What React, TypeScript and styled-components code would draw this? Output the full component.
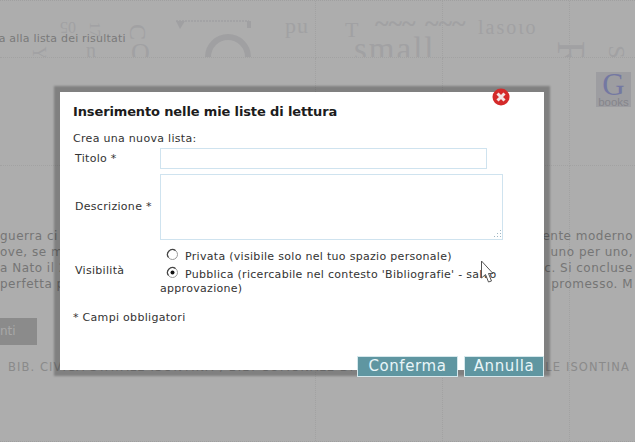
import { FC } from "react";
import styled, { createGlobalStyle } from "styled-components";

const GlobalStyle = createGlobalStyle`
  html, body { margin: 0; padding: 0; background: #adadad; }
  body { font-family: "DejaVu Sans", Verdana, sans-serif; }
`;

const Page = styled.div`
  position: relative;
  width: 635px;
  height: 442px;
  overflow: hidden;
  background: #adadad;
`;

const Backdrop = styled.div`
  position: absolute;
  inset: 0;
  display: grid;
  grid-template-columns: 316px 127px 127px 1fr;
  grid-template-rows: 57px 108px 1fr;
  border-top: 1px dotted #a0a0a0;
  border-bottom: 1px dotted #a0a0a0;
  box-sizing: border-box;
`;

const Cell = styled.div`
  border-right: 1px dotted #a2a2a2;
  border-bottom: 1px dotted #a2a2a2;
  &:nth-child(4n) { border-right: 0; }
  &:nth-child(n + 9) { border-bottom: 0; }
`;

const Content = styled.div`
  position: relative;
  display: flex;
  flex-direction: column;
  height: 100%;
`;

const Banner = styled.header`
  position: relative;
  height: 57px;
  overflow: hidden;
  flex: none;
`;

const Glyph = styled.span<{ $x: number; $y: number; $size: number; $turn?: number; $bold?: boolean; $track?: number }>`
  position: absolute;
  left: ${(p) => p.$x}px;
  top: ${(p) => p.$y}px;
  font-family: "Liberation Serif", serif;
  font-size: ${(p) => p.$size}px;
  font-weight: ${(p) => (p.$bold ? 700 : 400)};
  letter-spacing: ${(p) => p.$track ?? 0}px;
  line-height: 1;
  color: #a1a1a3;
  white-space: nowrap;
  transform: rotate(${(p) => p.$turn ?? 0}deg);
`;

const BackLink = styled.a`
  position: absolute;
  left: -25px;
  top: 32px;
  font-size: 11px;
  line-height: 14px;
  letter-spacing: 0.2px;
  color: #7a7a7a;
  white-space: nowrap;
`;

const Ornament = styled.svg`
  position: absolute;
  left: 170px;
  top: 18px;
`;

const BooksBadge = styled.div`
  align-self: flex-end;
  width: 35px;
  height: 35px;
  margin: 15px 4px 0 0;
  background: #9d9da1;
  display: flex;
  flex-direction: column;
  align-items: center;
  overflow: hidden;
`;

const BooksG = styled.span`
  font-family: "Liberation Serif", serif;
  font-size: 31px;
  line-height: 26px;
  color: #7478a2;
`;

const BooksLabel = styled.span`
  font-family: "Liberation Sans", sans-serif;
  font-size: 11.5px;
  line-height: 9px;
  color: #85858b;
`;

const Article = styled.section`
  margin-top: 121px;
  display: flex;
  flex-direction: column;
  font-size: 12px;
  line-height: 16px;
  letter-spacing: 0.5px;
  color: #757575;
`;

const ArticleRow = styled.div`
  display: flex;
  justify-content: space-between;
  padding-right: 2px;
  white-space: nowrap;
`;

const MoreButton = styled.div`
  width: 37px;
  height: 27px;
  margin-top: 26px;
  background: #8b8b8b;
  color: #a8a8a8;
  font-size: 12px;
  line-height: 27px;
  overflow: hidden;
  flex: none;
`;

const LibraryLine = styled.div`
  margin: 15px 5px 0 8px;
  display: flex;
  justify-content: space-between;
  font-size: 11.5px;
  line-height: 14px;
  letter-spacing: 1.1px;
  color: #8a8a8a;
  white-space: nowrap;
`;

const Modal = styled.div`
  position: absolute;
  left: 60px;
  top: 92px;
  width: 484px;
  height: 278px;
  box-sizing: border-box;
  padding: 12px 0 0 13px;
  display: flex;
  flex-direction: column;
  background: #fff;
  box-shadow: 0 0 2px 6px rgba(0, 0, 0, 0.26);
  color: #333;
  font-size: 11px;
  line-height: 14px;
  letter-spacing: 0.3px;
`;

const CloseButton = styled.svg`
  position: absolute;
  left: 432px;
  top: -4px;
`;

const Title = styled.h2`
  margin: 0;
  font-size: 13px;
  line-height: 15px;
  font-weight: 700;
  letter-spacing: -0.13px;
  color: #1c1c1c;
`;

const Intro = styled.p`
  margin: 13px 0 0;
`;

const FieldRow = styled.div<{ $gap: number }>`
  display: grid;
  grid-template-columns: 85px 1fr;
  align-items: center;
  padding-left: 2px;
  margin-top: ${(p) => p.$gap}px;
`;

const FieldLabel = styled.label<{ $drop?: number }>`
  padding-top: ${(p) => p.$drop ?? 0}px;
`;

const TextField = styled.div<{ $w: number; $h: number }>`
  width: ${(p) => p.$w}px;
  height: ${(p) => p.$h}px;
  box-sizing: border-box;
  border: 1px solid #cfe3ef;
  background: #fff;
  position: relative;
`;

const ResizeGrip = styled.svg`
  position: absolute;
  right: 0;
  bottom: 0;
`;

const RadioList = styled.div`
  display: flex;
  flex-direction: column;
  margin-top: 8px;
`;

const RadioLine = styled.div`
  padding-left: 6px;
  height: 18px;
  display: flex;
  align-items: flex-start;
  white-space: nowrap;
`;

const RadioDot = styled.svg`
  flex: none;
  margin-right: 6px;
`;

const RadioText = styled.span`
  padding-top: 2px;
`;

const Wrapped = styled.div`
  margin-top: -2px;
`;

const Note = styled.p`
  margin: 15px 0 0;
`;

const Actions = styled.div`
  margin-top: auto;
  margin-bottom: -7px;
  display: flex;
  justify-content: flex-end;
  gap: 6px;
`;

const ActionButton = styled.button<{ $w: number }>`
  width: ${(p) => p.$w}px;
  height: 21px;
  padding: 0;
  background: #5f96a1;
  border: 1px solid #d5e8ec;
  color: #e8f5f8;
  font-family: "DejaVu Sans", sans-serif;
  font-size: 15px;
  line-height: 17px;
  letter-spacing: 0.6px;
`;

const Pointer = styled.svg`
  position: absolute;
  left: 420px;
  top: 168px;
`;

const Radio: FC<{ checked?: boolean }> = ({ checked }) => (
  <RadioDot width="13" height="13" viewBox="0 0 13 13">
    <circle cx="6.5" cy="6.5" r="5" fill="#fff" stroke="#9a9a9a" />
    <path d="M2.5 9.5 A5 5 0 0 1 9.5 2.5" fill="none" stroke="#444" strokeWidth="1.2" />
    {checked && <circle cx="6.5" cy="6.5" r="2" fill="#111" />}
  </RadioDot>
);

export default function App() {
  return (
    <Page>
      <GlobalStyle />
      <Backdrop>
        {Array.from({ length: 12 }).map((_, i) => (
          <Cell key={i} />
        ))}
      </Backdrop>
      <Content>
        <Banner>
          <BackLink>Torna alla lista dei risultati</BackLink>
          <Glyph $x={60} $y={19} $size={16} $turn={180}>05</Glyph>
          <Glyph $x={87} $y={22} $size={15} $turn={90}>17</Glyph>
          <Glyph $x={32} $y={44} $size={18} $turn={90}>Y</Glyph>
          <Glyph $x={86} $y={44} $size={20} $turn={180}>u</Glyph>
          <Glyph $x={130} $y={20} $size={24} $turn={90}>C</Glyph>
          <Glyph $x={131} $y={40} $size={26}>O</Glyph>
          <Ornament width="90" height="40" viewBox="0 0 90 40">
            <path d="M6 3 H79" stroke="#a0a0a2" strokeWidth="1.5" strokeDasharray="2 1" />
            <path d="M6 3 H15 L10 11 Z" fill="#a0a0a2" />
            <path d="M77 3 H81 V10 H77 Z" fill="#a0a0a2" />
            <circle cx="58" cy="39" r="20" fill="none" stroke="#a0a0a2" strokeWidth="6" />
          </Ornament>
          <Glyph $x={285} $y={15} $size={22} $track={1}>pu</Glyph>
          <Glyph $x={345} $y={19} $size={22}>T</Glyph>
          <Glyph $x={375} $y={11} $size={26} $bold>~~~</Glyph>
          <Glyph $x={425} $y={11} $size={26} $bold>~~~</Glyph>
          <Glyph $x={354} $y={33} $size={33} $track={2}>small</Glyph>
          <Glyph $x={478} $y={17} $size={20} $track={2}>lasoɩo</Glyph>
          <Glyph $x={558} $y={34} $size={40} $turn={90}>R</Glyph>
          <Glyph $x={610} $y={40} $size={24} $turn={90}>S</Glyph>
        </Banner>
        <BooksBadge>
          <BooksG>G</BooksG>
          <BooksLabel>books</BooksLabel>
        </BooksBadge>
        <Article>
          <ArticleRow>
            <span>guerra ci a</span>
            <span>ente moderno</span>
          </ArticleRow>
          <ArticleRow>
            <span>ove, se m</span>
            <span>uno per uno,</span>
          </ArticleRow>
          <ArticleRow>
            <span>a Nato il 2</span>
            <span>c. Si concluse</span>
          </ArticleRow>
          <ArticleRow>
            <span>perfetta p</span>
            <span>promesso. M</span>
          </ArticleRow>
        </Article>
        <MoreButton>nti</MoreButton>
        <LibraryLine>
          <span>BIB. CIVICA STATALE ISONTINA , BIB. COMUNALE DI GORIZIA</span>
          <span>PROVINCIALE ISONTINA</span>
        </LibraryLine>
      </Content>
      <Modal>
        <CloseButton width="20" height="20" viewBox="0 0 20 20">
          <circle cx="9" cy="9" r="8.5" fill="#d42a2a" />
          <path d="M5.5 5.5 L12.5 12.5 M12.5 5.5 L5.5 12.5" stroke="#f4e6e6" strokeWidth="3" />
        </CloseButton>
        <Title>Inserimento nelle mie liste di lettura</Title>
        <Intro>Crea una nuova lista:</Intro>
        <FieldRow $gap={2}>
          <FieldLabel>Titolo *</FieldLabel>
          <TextField $w={327} $h={21} />
        </FieldRow>
        <FieldRow $gap={5}>
          <FieldLabel>Descrizione *</FieldLabel>
          <TextField $w={343} $h={66}>
            <ResizeGrip width="12" height="10" viewBox="0 0 12 10">
              <path d="M10 1h1v1h-1z M7 4h1v1H7z M10 4h1v1h-1z M4 7h1v1H4z M7 7h1v1H7z M10 7h1v1h-1z" fill="#9fb6c2" />
            </ResizeGrip>
          </TextField>
        </FieldRow>
        <FieldRow $gap={0}>
          <FieldLabel $drop={6}>Visibilità</FieldLabel>
          <RadioList>
            <RadioLine>
              <Radio />
              <RadioText>Privata (visibile solo nel tuo spazio personale)</RadioText>
            </RadioLine>
            <RadioLine>
              <Radio checked />
              <RadioText>Pubblica (ricercabile nel contesto 'Bibliografie' - salvo</RadioText>
            </RadioLine>
            <Wrapped>approvazione)</Wrapped>
          </RadioList>
        </FieldRow>
        <Note>* Campi obbligatori</Note>
        <Actions>
          <ActionButton $w={101}>Conferma</ActionButton>
          <ActionButton $w={80}>Annulla</ActionButton>
        </Actions>
        <Pointer width="14" height="24" viewBox="0 0 14 24">
          <path d="M1.5 1 V18 L5.5 14.5 L8.5 22 L11.5 21 L8.5 13.5 L13 13.5 Z" fill="#fff" stroke="#555" strokeWidth="1" />
        </Pointer>
      </Modal>
    </Page>
  );
}
